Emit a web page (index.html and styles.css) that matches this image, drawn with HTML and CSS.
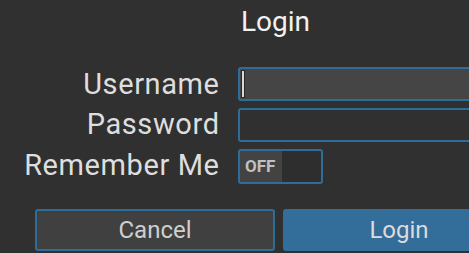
FILE: index.html
```html
<!DOCTYPE html>
<html lang="en">
<head>
    <meta charset="UTF-8" />
    <title>Login</title>
    <link rel="stylesheet" href="styles.css">
</head>
<body>

<div class="dialog">
    <div class="title">Login</div>

    <div class="form">
        <div class="label">Username</div>
        <div class="field focused"><span class="caret"></span></div>

        <div class="label">Password</div>
        <div class="field"></div>

        <div class="label">Remember Me</div>
        <div class="switch">
            <div class="switch-off">OFF</div>
        </div>
    </div>

    <div class="buttons">
        <button class="btn">Cancel</button>
        <button class="btn primary">Login</button>
    </div>
</div>

</body>
</html>
```

FILE: styles.css
```css
body {
    margin: 0;
    background: #303030;
    font-family: Roboto, "Noto Sans", sans-serif;
    color: #e6e6e6;
    overflow: hidden;
    height: 253px;
}

.dialog {
    width: 560px;
    display: flex;
    flex-direction: column;
}

.title {
    font-size: 28px;
    line-height: 34px;
    height: 34px;
    margin-top: 5px;
    padding-left: 241px;
    color: #f2f2f2;
}

.form {
    display: grid;
    grid-template-columns: 219px 1fr;
    column-gap: 19px;
    row-gap: 6px;
    margin-top: 28px;
}

.label {
    text-align: right;
    font-size: 29px;
    line-height: 34px;
    letter-spacing: 0.6px;
    margin-right: -0.6px;
    color: #dedede;
}

.field {
    height: 30px;
    border: 2px solid #2f6d99;
    border-radius: 3px;
    background: #303030;
    position: relative;
    margin-top: 1px;
}

.field.focused {
    background: #454545;
    margin-top: 0;
}

.caret {
    position: absolute;
    left: 2px;
    top: 2px;
    width: 2px;
    height: 26px;
    background: #d8d8d8;
    box-shadow: 0 0 0 1px #2a2a2a;
}

.switch {
    width: 81px;
    height: 31px;
    border: 2px solid #2f6d99;
    border-radius: 3px;
    background: #2e2e2e;
    display: flex;
    margin-top: 1px;
}

.switch-off {
    width: 42px;
    background: #434343;
    color: #c0c0c0;
    font-size: 17px;
    font-weight: bold;
    line-height: 31px;
    padding-left: 5px;
    box-sizing: border-box;
}

.buttons {
    display: flex;
    gap: 8px;
    margin-top: 25px;
    padding-left: 35px;
}

.btn {
    width: 240px;
    height: 42px;
    border: 2px solid #2f6d99;
    border-radius: 3px;
    background: #404040;
    color: #cfcfcf;
    font-family: Roboto, "Noto Sans", sans-serif;
    font-size: 24px;
    padding: 0;
}

.btn.primary {
    width: 232px;
    background: #336d99;
    border-color: #336d99;
    color: #dcdcdc;
}
```
